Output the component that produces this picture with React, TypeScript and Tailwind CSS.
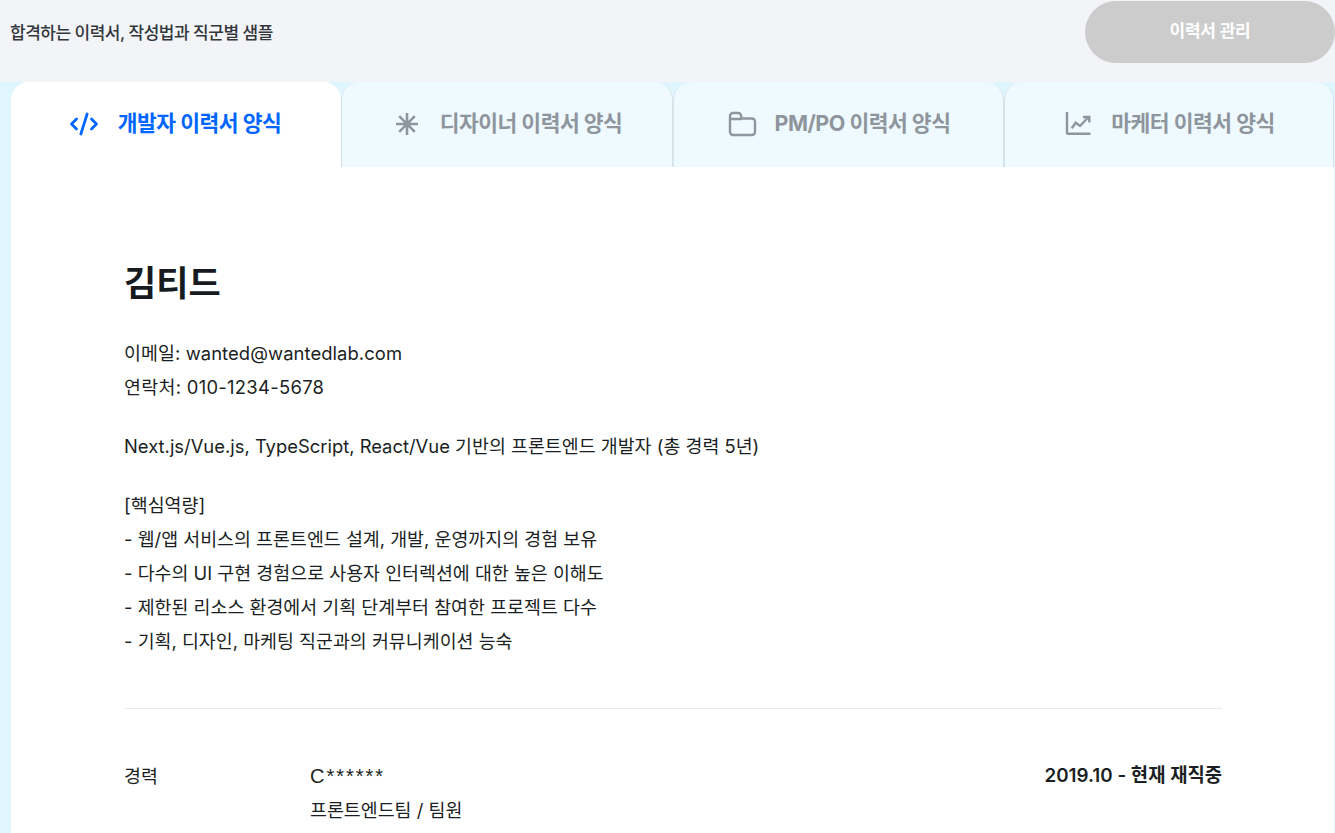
import { Code2 } from 'lucide-react';
import React from 'react';

const FONT = "font-['Inter','Noto_Sans_CJK_KR',sans-serif]";

function SparkIcon() {
  return (
    <svg width="30" height="30" viewBox="0 0 30 30" fill="none" stroke="currentColor" strokeWidth="2.6">
      <path d="M15 4V26M4 15H26M7.2 7.2L22.8 22.8M22.8 7.2L7.2 22.8" />
    </svg>
  );
}

function FolderIcon() {
  return (
    <svg width="30" height="30" viewBox="0 0 30 30" fill="none" stroke="currentColor" strokeWidth="2.4" strokeLinejoin="round">
      <path d="M3 10V7a3 3 0 0 1 3-3h5a3 3 0 0 1 3 2.4L14.6 9.5H25a3 3 0 0 1 3 3V23a3 3 0 0 1-3 3H6a3 3 0 0 1-3-3V10H14.6" />
    </svg>
  );
}

function TrendIcon() {
  return (
    <svg width="30" height="30" viewBox="0 0 30 30" fill="none" stroke="currentColor" strokeWidth="2.4">
      <path d="M4 3V23.8a1 1 0 0 0 1 1H27.5" />
      <path d="M8.7 19.3L12.7 13.7L17 17L25.3 8.2" />
      <path d="M20 8H26.3V13.5" />
    </svg>
  );
}

const tabs = [
  { label: '개발자 이력서 양식', icon: <Code2 size={30} strokeWidth={2.2} /> },
  { label: '디자이너 이력서 양식', icon: <SparkIcon /> },
  { label: 'PM/PO 이력서 양식', icon: <FolderIcon /> },
  { label: '마케터 이력서 양식', icon: <TrendIcon /> },
];

const strengths = [
  '[핵심역량]',
  '- 웹/앱 서비스의 프론트엔드 설계, 개발, 운영까지의 경험 보유',
  '- 다수의 UI 구현 경험으로 사용자 인터렉션에 대한 높은 이해도',
  '- 제한된 리소스 환경에서 기획 단계부터 참여한 프로젝트 다수',
  '- 기획, 디자인, 마케팅 직군과의 커뮤니케이션 능숙',
];

export default function App() {
  return (
    <div className={`${FONT} flex h-[833px] flex-col overflow-hidden bg-[#e0f6ff]`}>
      <header className="flex h-[82px] shrink-0 items-start justify-between bg-[#f2f4f8] pl-[10px]">
        <p className="mt-[21px] text-[17px] font-medium leading-6 tracking-[-0.5px] text-[#33373b]">
          합격하는 이력서, 작성법과 직군별 샘플
        </p>
        <button className="mt-px flex h-[62px] w-[250px] items-center justify-center rounded-full bg-[#cccccc] text-[17px] font-bold tracking-[-0.2px] text-white">
          이력서 관리
        </button>
      </header>

      <main className="ml-[11px] mr-px flex-1 bg-white">
        <nav className="grid h-[85px] grid-cols-[330px_332px_331px_330px] bg-[#e0f6ff]">
          {tabs.map(({ label, icon }, i) => (
            <div
              key={label}
              className={
                i === 0
                  ? 'flex items-center justify-center gap-[19px] rounded-t-[18px] bg-white pb-[2px] pr-[2px] text-[#0066ff]'
                  : 'flex items-center justify-center gap-[18px] rounded-t-[18px] border-x border-[#d5e3ec] bg-[#eefaff] pb-[2px] text-[#8f959c]'
              }
            >
              {icon}
              <span className="text-[21.5px] font-bold tracking-[-0.5px]">{label}</span>
            </div>
          ))}
        </nav>

        <section className="pl-[113px] pr-[112px] text-[18.4px] leading-[34px] text-[#1b1f23]">
          <h1 className="mt-[92px] text-[35px] font-bold leading-[48px] text-[#171b1f]">김티드</h1>
          <p className="mt-[29px] tracking-[0.08px]">이메일: wanted@wantedlab.com</p>
          <p className="tracking-[0.3px]">연락처: 010-1234-5678</p>
          <p className="mt-[25px]">Next.js/Vue.js, TypeScript, React/Vue 기반의 프론트엔드 개발자 (총 경력 5년)</p>
          <div className="mt-[25px]">
            {strengths.map((line) => (
              <p key={line}>{line}</p>
            ))}
          </div>
          <hr className="mt-[50px] border-[#e6ebf0]" />
          <div className="mt-[50px] flex">
            <span className="w-[186px] shrink-0">경력</span>
            <div className="flex-1">
              <p className="font-['Liberation_Sans',sans-serif] text-[20px] tracking-[2px]">C******</p>
              <p>프론트엔드팀 / 팀원</p>
            </div>
            <span className="text-[18.8px] font-semibold">2019.10 - 현재 재직중</span>
          </div>
        </section>
      </main>
    </div>
  );
}
